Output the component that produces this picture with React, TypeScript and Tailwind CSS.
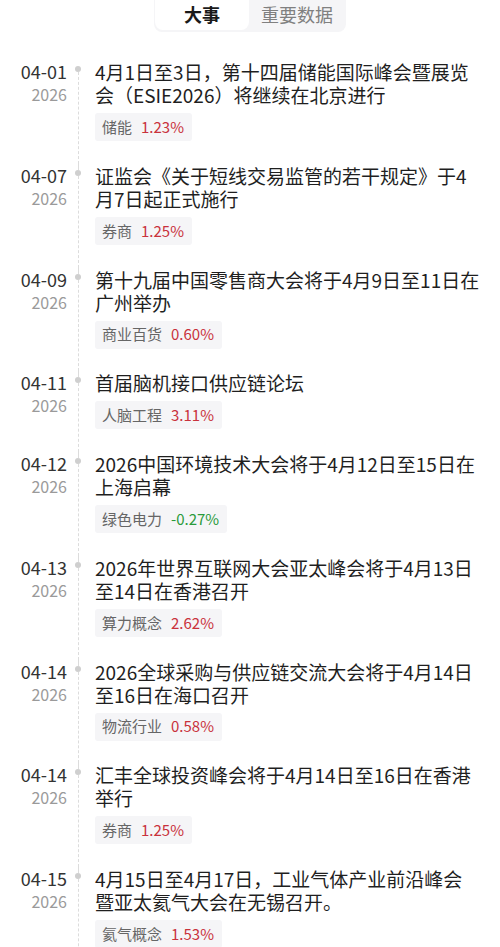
const events = [
  {
    date: "04-01",
    lines: ["4月1日至3日，第十四届储能国际峰会暨展览", "会（ESIE2026）将继续在北京进行"],
    tag: "储能",
    change: "1.23%",
  },
  {
    date: "04-07",
    lines: ["证监会《关于短线交易监管的若干规定》于4", "月7日起正式施行"],
    tag: "券商",
    change: "1.25%",
  },
  {
    date: "04-09",
    lines: ["第十九届中国零售商大会将于4月9日至11日在", "广州举办"],
    tag: "商业百货",
    change: "0.60%",
  },
  {
    date: "04-11",
    lines: ["首届脑机接口供应链论坛"],
    tag: "人脑工程",
    change: "3.11%",
  },
  {
    date: "04-12",
    lines: ["2026中国环境技术大会将于4月12日至15日在", "上海启幕"],
    tag: "绿色电力",
    change: "-0.27%",
  },
  {
    date: "04-13",
    lines: ["2026年世界互联网大会亚太峰会将于4月13日", "至14日在香港召开"],
    tag: "算力概念",
    change: "2.62%",
  },
  {
    date: "04-14",
    lines: ["2026全球采购与供应链交流大会将于4月14日", "至16日在海口召开"],
    tag: "物流行业",
    change: "0.58%",
  },
  {
    date: "04-14",
    lines: ["汇丰全球投资峰会将于4月14日至16日在香港", "举行"],
    tag: "券商",
    change: "1.25%",
  },
  {
    date: "04-15",
    lines: ["4月15日至4月17日，工业气体产业前沿峰会", "暨亚太氦气大会在无锡召开。"],
    tag: "氦气概念",
    change: "1.53%",
  },
];

const App = () => {
  return (
    <div
      className="w-[500px] h-[947px] overflow-hidden bg-white"
      style={{ fontFamily: '"Noto Sans CJK SC", "Noto Sans", sans-serif' }}
    >
      {/* tabs */}
      <div className="flex justify-center">
        <div className="flex h-[32px] w-[192px] rounded-b-lg bg-[#f5f5f7] px-[1px] pb-[2px]">
          <div className="flex w-[94px] items-start justify-center rounded-b-lg bg-white text-[18px] font-bold leading-[28px] text-[#1a1a1a]">
            大事
          </div>
          <div className="flex flex-1 items-start justify-center text-[18px] leading-[28px] text-[#808080]">
            重要数据
          </div>
        </div>
      </div>

      {/* timeline */}
      <div className="pt-[28px]">
        {events.map((ev, i) => (
          <div key={i} className="flex">
            <div className="w-[67px] shrink-0 text-right">
              <div className="text-[18px] leading-[23px] text-[#333]">{ev.date}</div>
              <div className="text-[16px] leading-[22px] text-[#9a9a9a]">2026</div>
            </div>
            <div className="flex w-[22px] shrink-0 flex-col items-center">
              <div
                className={
                  i === 0
                    ? "h-[6px]"
                    : "h-[6px] border-l border-dashed border-[#dcdcdc]"
                }
              />
              <div className="h-[6px] w-[6px] rounded-full bg-[#cfcfcf]" />
              <div className="flex-1 border-l border-dashed border-[#dcdcdc]" />
            </div>
            <div className="ml-[6px] pb-[22.75px]">
              {ev.lines.map((line, j) => (
                <div
                  key={j}
                  className="whitespace-nowrap text-[19px] leading-[23px] text-[#1f1f1f]"
                >
                  {line}
                </div>
              ))}
              <div className="mt-[7px] inline-flex h-[28px] items-center gap-[9px] rounded-[3px] bg-[#f5f5f7] pl-[7px] pr-[8px] text-[15px]">
                <span className="text-[#666]">{ev.tag}</span>
                <span
                  className={
                    ev.change.startsWith("-") ? "text-[#2a9a3a]" : "text-[#c9323c]"
                  }
                >
                  {ev.change}
                </span>
              </div>
            </div>
          </div>
        ))}
      </div>
    </div>
  );
};

export default App;
